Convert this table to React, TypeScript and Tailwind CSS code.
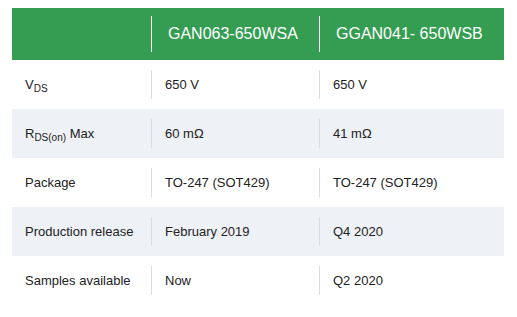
import React from "react";

const rows: { label: React.ReactNode; a: string; b: string; grey: boolean }[] = [
  {
    label: (
      <span>
        V<sub className="text-[10px] relative top-[3px] align-baseline">DS</sub>
      </span>
    ),
    a: "650 V",
    b: "650 V",
    grey: false,
  },
  {
    label: (
      <span>
        R<sub className="text-[10px] relative top-[3px] align-baseline">DS(on)</sub> Max
      </span>
    ),
    a: "60 mΩ",
    b: "41 mΩ",
    grey: true,
  },
  { label: "Package", a: "TO-247 (SOT429)", b: "TO-247 (SOT429)", grey: false },
  { label: "Production release", a: "February 2019", b: "Q4 2020", grey: true },
  { label: "Samples available", a: "Now", b: "Q2 2020", grey: false },
];

export default function App() {
  return (
    <div
      className="w-[517px] h-[317px] bg-white pt-[8px] px-[12px]"
      style={{ fontFamily: '"Liberation Sans", Arial, sans-serif' }}
    >
      <div className="w-[492px]">
        <div className="grid grid-cols-[139px_168px_185px] bg-[#349d52] py-[8px] text-white text-[16px]">
          <div className="h-[36px]" />
          <div className="h-[36px] border-l border-white flex items-center pl-[16px]">GAN063-650WSA</div>
          <div className="h-[36px] border-l border-white flex items-center pl-[16px]">GGAN041- 650WSB</div>
        </div>
        {rows.map((r, i) => (
          <div
            key={i}
            className={`grid grid-cols-[139px_168px_185px] py-[10px] text-[13px] text-[#222222] ${
              r.grey ? "bg-[#eef1f6]" : "bg-white"
            }`}
          >
            <div className="h-[29px] flex items-center pl-[13px]">{r.label}</div>
            <div className="h-[29px] border-l border-[#dcdcdc] flex items-center pl-[13px]">{r.a}</div>
            <div className="h-[29px] border-l border-[#dcdcdc] flex items-center pl-[13px]">{r.b}</div>
          </div>
        ))}
      </div>
    </div>
  );
}
